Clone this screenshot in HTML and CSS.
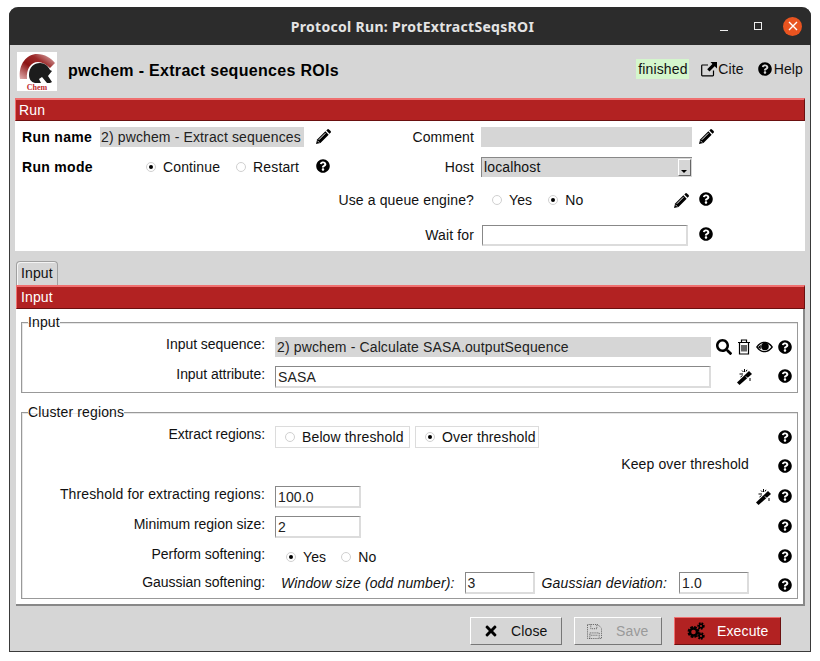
FILE: index.html
```html
<!DOCTYPE html>
<html>

<head>
  <meta charset="utf-8">
  <meta name="viewport" content="width=device-width">
  <title>Protocol Run: ProtExtractSeqsROI</title>
  <link rel="stylesheet" href="styles.css">
</head>

<body>
  <svg class="defs" width="0" height="0">
    <symbol id="help" viewBox="0 0 512 512">
      <path d="M504 256c0 136.997-111.043 248-248 248S8 392.997 8 256C8 119.083 119.043 8 256 8s248 111.083 248 248zM262.655 90c-54.497 0-89.255 22.957-116.549 63.758-3.536 5.286-2.353 12.415 2.715 16.258l34.699 26.31c5.205 3.947 12.621 3.008 16.665-2.122 17.864-22.658 30.113-35.797 57.303-35.797 20.429 0 45.698 13.148 45.698 32.958 0 14.976-12.363 22.667-32.534 33.976C247.128 238.528 216 254.941 216 296v4c0 6.627 5.373 12 12 12h56c6.627 0 12-5.373 12-12v-1.333c0-28.462 83.186-29.647 83.186-106.667 0-58.002-60.165-102-116.531-102zM256 338c-25.365 0-46 20.635-46 46 0 25.364 20.635 46 46 46s46-20.636 46-46c0-25.365-20.635-46-46-46z"/>
    </symbol>
    <symbol id="pencil" viewBox="0 0 16 16">
      <path d="M0 16L1.200 11.300 10 2.500 13.500 6 4.700 14.800z"/>
      <path d="M11 1.500L12.300.3Q13 -.2 13.800.4L15.600 2.200Q16.200 3 15.700 3.700L14.500 5z"/>
      <path d="M3 11.500L10 4.500" stroke="#fff" stroke-width="1" fill="none"/>
      <path d="M1.500 12.500L3.500 14.500" stroke="#fff" stroke-width=".8" fill="none"/>
    </symbol>
    <symbol id="search" viewBox="0 0 512 512">
      <path d="M505 442.7L405.3 343c-4.5-4.5-10.6-7-17-7H372c27.6-35.3 44-79.7 44-128C416 93.1 322.9 0 208 0S0 93.1 0 208s93.1 208 208 208c48.3 0 92.7-16.4 128-44v16.3c0 6.4 2.5 12.5 7 17l99.7 99.7c9.4 9.4 24.6 9.4 33.9 0l28.3-28.3c9.4-9.4 9.4-24.6.1-34zM208 336c-70.7 0-128-57.2-128-128 0-70.7 57.2-128 128-128 70.7 0 128 57.2 128 128 0 70.7-57.2 128-128 128z"/>
    </symbol>
    <symbol id="trash" viewBox="0 0 14 16">
      <path d="M1 3.500h12M4.500 3.500V1h5v2.500M2.500 3.500v11.500h9V3.500M5 6v6.500M7 6v6.500M9 6v6.500" fill="none" stroke="#000" stroke-width="1.200"/>
    </symbol>
    <symbol id="eye" viewBox="0 0 18 12">
      <path d="M0 6C3 1.500 6 .5 9 .5s6 1 9 5.500C15 10.500 12 11.500 9 11.500S3 10.500 0 6zM1.800 6C4 9 6.500 10.300 9 10.300S14 9 16.200 6C14 3 11.500 1.700 9 1.700S4 3 1.800 6z"/>
      <circle cx="9.500" cy="5.500" r="4"/>
      <path d="M2 6.200L5 3.500 5 8.500z"/>
    </symbol>
    <symbol id="wand" viewBox="0 0 16 16">
      <path d="M0 13.500L12 2 15 5 2.500 16z"/>
      <path d="M7.500 3V0M10 .8L9 2.500M5 1.500L6.500 3M2.500 5H6M3.500 8L5.500 6.500M13 9V12" stroke="#000" stroke-width="1" fill="none"/>
      <path d="M9 7.500L11 9.500" stroke="#fff" stroke-width="1" fill="none"/>
    </symbol>
    <symbol id="times" viewBox="0 0 352 512">
      <path d="M242.72 256l100.07-100.07c12.28-12.28 12.28-32.19 0-44.48l-22.24-22.24c-12.28-12.28-32.19-12.28-44.48 0L176 189.28 75.93 89.21c-12.28-12.28-32.19-12.28-44.48 0L9.21 111.45c-12.28 12.28-12.28 32.19 0 44.48L109.28 256 9.21 356.07c-12.28 12.28-12.28 32.19 0 44.48l22.24 22.24c12.28 12.28 32.2 12.28 44.48 0L176 322.72l100.07 100.07c12.28 12.28 32.2 12.28 44.48 0l22.24-22.24c12.28-12.28 12.28-32.19 0-44.48L242.72 256z"/>
    </symbol>
    <symbol id="save" viewBox="0 0 16 16">
      <path d="M.5 .5H11.500L15.500 4.500V15.500H.5zM4 .5V5H10.500V.5M3 15.500V9.500H13V15.500M4 12H12" fill="none" stroke="#555" stroke-width="1" stroke-dasharray="1 1"/>
    </symbol>
    <symbol id="cogs" viewBox="0 0 18 18">
      <circle cx="6.500" cy="10" r="4.700" fill="none" stroke="#000" stroke-width="2.600" stroke-dasharray="2.500 1.200"/>
      <circle cx="6.500" cy="10" r="3.500" fill="none" stroke="#000" stroke-width="2.400"/>
      <circle cx="14" cy="4" r="2.500" fill="none" stroke="#000" stroke-width="2.400" stroke-dasharray="1.500 .9"/>
      <circle cx="14" cy="4" r="1.800" fill="none" stroke="#000" stroke-width="1.500"/>
      <circle cx="14" cy="14" r="2.500" fill="none" stroke="#000" stroke-width="2.400" stroke-dasharray="1.500 .9"/>
      <circle cx="14" cy="14" r="1.800" fill="none" stroke="#000" stroke-width="1.500"/>
    </symbol>
    <symbol id="cite" viewBox="0 0 16 15">
      <path d="M12.500 9V13.600Q12.500 14.300 11.800 14.300H1.400Q.7 14.300 .7 13.600V4.200Q.7 3.500 1.400 3.500H7" fill="none" stroke="#000" stroke-width="1.200"/>
      <path d="M9.500 0.500H16V7L13.700 4.800 8.500 10 6.200 7.700 11.400 2.600z"/>
    </symbol>
  </svg>

  <div class="window">
    <div class="titlebar">
      <span></span>
      <span class="wintitle">Protocol Run: ProtExtractSeqsROI</span>
      <div class="winctl">
        <span class="winmin"></span>
        <span class="winmax"></span>
        <span class="winclose">
          <svg width="10" height="10" viewBox="0 0 10 10"><path d="M1 1L9 9M9 1L1 9" stroke="#fff" stroke-width="1.400"/></svg>
        </span>
      </div>
    </div>

    <div class="header">
      <svg class="logo" viewBox="0 0 40 39">
        <defs>
          <linearGradient id="arc" x1="0" y1="1" x2="1" y2="0">
            <stop offset="0" stop-color="#e2b0b0"/>
            <stop offset="0.4" stop-color="#8c1414"/>
            <stop offset="0.65" stop-color="#9c2a2a"/>
            <stop offset="1" stop-color="#e4c4c4"/>
          </linearGradient>
        </defs>
        <path d="M3 27C1 12 10 2 20 2 28 2 34 6 38 11L33 16C29 12 25 10 21 10 14 10 9 17 10 27z" fill="url(#arc)"/>
        <path d="M12 23C12 15 17 11 23 11 28 11 31 14 33 18L35 19 31 24 35 30 33 31H30L25 25 22 27 24 31H18C14 30 12 27 12 23z" fill="#1c1c1c"/>
        <text class="logotext" x="20" y="38" text-anchor="middle">Chem</text>
      </svg>
      <span class="protname">pwchem - Extract sequences ROIs</span>
      <span class="status">finished</span>
      <a class="toplink cite"><svg class="ic16"><use href="#cite"/></svg>Cite</a>
      <a class="toplink"><svg class="ic14"><use href="#help"/></svg>Help</a>
    </div>

    <div class="redbar">Run</div>
    <div class="runform">
      <b class="runlabel">Run name</b>
      <div class="readonly runname">2) pwchem - Extract sequences</div>
      <svg class="ic15 iconpad"><use href="#pencil"/></svg>
      <span class="rlabel">Comment</span>
      <div class="readonly"></div>
      <svg class="ic15 iconright"><use href="#pencil"/></svg>

      <b class="runlabel">Run mode</b>
      <div class="radios modes">
        <span class="radio on"></span><span class="optname wide">Continue</span>
        <span class="radio"></span><span class="optname">Restart</span>
      </div>
      <svg class="ic14 iconpad"><use href="#help"/></svg>
      <span class="rlabel">Host</span>
      <div class="select">localhost<span class="selectbtn"></span></div>
      <span></span>

      <span class="spanleft"></span>
      <span class="rlabel queue">Use a queue engine?</span>
      <div class="queueopts">
        <div class="radios">
          <span class="radio"></span><span class="optname yesgap">Yes</span>
          <span class="radio on"></span><span class="optname">No</span>
        </div>
        <svg class="ic15"><use href="#pencil"/></svg>
      </div>
      <svg class="ic14 iconright"><use href="#help"/></svg>

      <span class="spanleft"></span>
      <span class="rlabel">Wait for</span>
      <div class="entry waitfor"></div>
      <svg class="ic14 iconright"><use href="#help"/></svg>
    </div>

    <div class="tabs"><span class="tab">Input</span></div>
    <div class="redbar inputbar">Input</div>
    <div class="inputpanel">
      <fieldset class="group first">
        <legend>Input</legend>
        <div class="rows">
          <span class="label uplabel">Input sequence:</span>
          <div class="inrow">
            <div class="readonly seqfield">2) pwchem - Calculate SASA.outputSequence</div>
            <svg class="ic16"><use href="#search"/></svg>
            <svg class="trashic"><use href="#trash"/></svg>
            <svg class="eyeic"><use href="#eye"/></svg>
          </div>
          <svg class="ic14 helpic"><use href="#help"/></svg>

          <span class="label">Input attribute:</span>
          <div class="inrow">
            <div class="entry attrfield">SASA</div>
            <svg class="ic16 wandic"><use href="#wand"/></svg>
          </div>
          <svg class="ic14 helpic"><use href="#help"/></svg>
        </div>
      </fieldset>

      <fieldset class="group second">
        <legend>Cluster regions</legend>
        <div class="rows">
          <span class="label">Extract regions:</span>
          <div class="inrow">
            <div class="radiobox below"><span class="radio"></span><span class="optname">Below threshold</span></div>
            <div class="radiobox over"><span class="radio on"></span><span class="optname">Over threshold</span></div>
          </div>
          <svg class="ic14 helpic lowhelp"><use href="#help"/></svg>

          <span></span>
          <div class="keep">Keep over threshold</div>
          <svg class="ic14 helpic"><use href="#help"/></svg>

          <span class="label longlabel">Threshold for extracting regions:</span>
          <div class="inrow spread">
            <div class="entry small">100.0</div>
            <svg class="ic16"><use href="#wand"/></svg>
          </div>
          <svg class="ic14 helpic"><use href="#help"/></svg>

          <span class="label">Minimum region size:</span>
          <div class="inrow"><div class="entry small">2</div></div>
          <svg class="ic14 helpic"><use href="#help"/></svg>

          <span class="label">Perform softening:</span>
          <div class="radios soft">
            <span class="radio on"></span><span class="optname softyes">Yes</span>
            <span class="radio"></span><span class="optname">No</span>
          </div>
          <svg class="ic14 helpic"><use href="#help"/></svg>

          <span class="label">Gaussian softening:</span>
          <div class="inrow gauss">
            <i class="windowlabel">Window size (odd number):</i>
            <div class="entry tiny">3</div>
            <i class="devlabel">Gaussian deviation:</i>
            <div class="entry tiny">1.0</div>
          </div>
          <svg class="ic14 helpic lowhelp"><use href="#help"/></svg>
        </div>
      </fieldset>
    </div>

    <div class="footer">
      <button class="btn close"><svg class="ic16"><use href="#times"/></svg>Close</button>
      <button class="btn save" disabled><svg class="ic15"><use href="#save"/></svg>Save</button>
      <button class="btn exec"><svg class="cogsic"><use href="#cogs"/></svg>Execute</button>
    </div>
  </div>
</body>

</html>
```

FILE: styles.css
```css
body {
  margin: 0;
  background-color: #fff;
  font-family: "Liberation Sans", Arial, sans-serif;
  font-size: 14px;
  color: #111;
  letter-spacing: 0.13px;
}

.defs {
  position: absolute;
}

svg {
  display: block;
  flex: none;
}

.ic14 { width: 14px; height: 14px; }
.ic15 { width: 15px; height: 15px; }
.ic16 { width: 16px; height: 16px; }

.window {
  box-sizing: border-box;
  width: 802px;
  height: 645px;
  margin: 7px 0 0 9px;
  background-color: #d6d6d6;
  border: 1px solid #3a3a3a;
  border-top: none;
  border-radius: 9px 9px 0 0;
}

.titlebar {
  display: grid;
  grid-template-columns: 1fr auto 1fr;
  align-items: center;
  height: 38px;
  margin: 0 -1px;
  background-color: #2c2c2c;
  border-radius: 9px 9px 0 0;
}

.wintitle {
  padding-left: 5px;
  font-family: "Noto Sans", sans-serif;
  font-size: 14px;
  font-weight: 700;
  letter-spacing: 0.3px;
  color: #e4e4e4;
}

.winctl {
  display: flex;
  align-items: center;
  justify-content: flex-end;
  padding-right: 9px;
}

.winmin {
  width: 8px;
  height: 1px;
  margin: 9px 26px 0 0;
  background-color: #eee;
}

.winmax {
  box-sizing: border-box;
  width: 8px;
  height: 8px;
  margin: -1px 21px 0 0;
  border: 1px solid #eee;
}

.winclose {
  display: flex;
  align-items: center;
  justify-content: center;
  width: 19px;
  height: 19px;
  border-radius: 50%;
  background-color: #e95420;
}

.header {
  display: flex;
  align-items: center;
  height: 53px;
  padding: 0 7px;
}

.logo {
  width: 40px;
  height: 39px;
  margin-top: -1px;
  background-color: #fff;
}

.logotext {
  font-family: "Liberation Serif", serif;
  font-size: 8px;
  font-weight: 700;
  fill: #c02a2a;
  letter-spacing: 0;
}

.protname {
  flex: 1;
  margin: -2px 0 0 11px;
  font-size: 16px;
  font-weight: 700;
  letter-spacing: 0.31px;
  color: #000;
}

.status {
  box-sizing: border-box;
  width: 53px;
  height: 20px;
  margin-top: -5px;
  padding-left: 2px;
  line-height: 20px;
  background-color: #d4f6cc;
}

.toplink {
  display: flex;
  align-items: center;
  gap: 2px;
  margin-top: -5px;
}

.cite {
  margin: -5px 14px 0 12px;
  gap: 1px;
}

.redbar {
  box-sizing: border-box;
  height: 23px;
  margin: 0 5px;
  padding-left: 3px;
  line-height: 21px;
  color: #fff;
  background-color: #b22222;
  border: 1px solid #6b1010;
  border-top: 2px solid #ef7070;
  border-left: 1px solid #ef7070;
}

.runform {
  display: grid;
  grid-template-columns: 85px 204px 30px 147px 211px 113px;
  grid-template-rows: 30px 33px 35px 20px;
  align-items: start;
  height: 124px;
  margin: 0 5px;
  padding: 6px 0 0;
  background-color: #fff;
}

.runlabel {
  padding-left: 7px;
  line-height: 20px;
  letter-spacing: 0.3px;
  color: #000;
}

.rlabel {
  padding-right: 7px;
  line-height: 20px;
  text-align: right;
}

.queue {
  white-space: nowrap;
}

.spanleft {
  grid-column: span 3;
}

.readonly {
  height: 20px;
  padding-left: 2px;
  line-height: 20px;
  background-color: #d6d6d6;
  color: #222;
}

.runname {
  padding-left: 1px;
}

.iconpad {
  margin: 2px 0 0 12px;
}

.iconright {
  margin: 2px 0 0 7px;
}

.radios {
  display: flex;
  align-items: center;
  height: 20px;
}

.modes {
  padding-left: 46px;
}

.radio {
  box-sizing: border-box;
  display: flex;
  align-items: center;
  justify-content: center;
  flex: none;
  width: 10px;
  height: 10px;
  margin-right: 7px;
  background-color: #fff;
  border: 1px solid #d0d0d0;
  border-radius: 50%;
}

.radio.on::after {
  content: "";
  width: 4px;
  height: 4px;
  background-color: #000;
  border-radius: 50%;
}

.wide {
  margin-right: 16px;
}

.yesgap {
  margin-right: 16px;
}

.select {
  box-sizing: border-box;
  display: flex;
  align-items: center;
  justify-content: space-between;
  height: 20px;
  padding: 0 0 1px 2px;
  background-color: #d6d6d6;
  border-top: 1px solid #888;
  border-left: 1px solid #888;
}

.selectbtn {
  position: relative;
  box-sizing: border-box;
  width: 13px;
  height: 17px;
  margin-right: 1px;
  background-color: #d6d6d6;
  border: 1px solid;
  border-color: #fff #666 #666 #fff;
}

.selectbtn::after {
  content: "";
  position: absolute;
  left: 2px;
  bottom: 2px;
  border: 3px solid transparent;
  border-top: 3px solid #000;
  border-bottom: none;
}

.queueopts {
  display: flex;
  align-items: center;
  justify-content: space-between;
  height: 20px;
  padding: 0 3px 0 11px;
}

.entry {
  box-sizing: border-box;
  height: 22px;
  padding-left: 2px;
  line-height: 20px;
  color: #222;
  background-color: #fff;
  border: 2px solid #dcdcdc;
  border-top: 1px solid #888;
  border-left: 1px solid #888;
}

.waitfor {
  width: 206px;
  height: 21px;
  margin-left: 1px;
}

.tabs {
  display: flex;
  height: 24px;
  margin: 10px 0 0 6px;
}

.tab {
  box-sizing: border-box;
  width: 42px;
  padding-left: 4px;
  line-height: 23px;
  background-color: #d6d6d6;
  border: 1px solid #a0a0a0;
  border-bottom: none;
  border-radius: 4px 4px 0 0;
  box-shadow: inset 1px 1px #f4f4f4;
}

.inputbar {
  height: 24px;
  margin-left: 6px;
  padding-left: 4px;
  line-height: 20px;
}

.inputpanel {
  box-sizing: border-box;
  height: 297px;
  margin: 0 5px 0 6px;
  padding: 5px 6px 0 5px;
  background-color: #fff;
  border-right: 2px solid #888;
  border-bottom: 2px solid #888;
}

.group {
  box-sizing: border-box;
  width: 777px;
  margin: 0;
  padding: 0 5px 0 0;
  min-width: 0;
  border: 1px solid #999;
  box-shadow: inset 1px 1px #e6e6e6;
}

.group legend {
  margin-left: 6px;
  padding: 0;
  line-height: 16px;
}

.first {
  height: 79px;
}

.second {
  height: 195px;
  margin-top: 11px;
}

.rows {
  display: grid;
  grid-template-columns: 253px 1fr 14px;
  align-items: start;
}

.first .rows {
  grid-template-rows: 29px 22px;
  padding-top: 7px;
}

.second .rows {
  grid-template-rows: 30px 30px 30px 30px 28px 22px;
  padding-top: 6px;
}

.label {
  padding-right: 10px;
  line-height: 16px;
  text-align: right;
  letter-spacing: -0.05px;
}

.longlabel {
  letter-spacing: 0.13px;
}

.uplabel {
  line-height: 14px;
}

.inrow {
  display: flex;
  align-items: center;
  gap: 5px;
}

.helpic {
  margin-top: 3px;
}

.lowhelp {
  margin-top: 4px;
}

.seqfield {
  width: 434px;
}

.attrfield {
  width: 436px;
}

.trashic {
  width: 14px;
  height: 16px;
}

.eyeic {
  width: 17px;
  height: 12px;
}

.wandic {
  margin-left: 21px;
}

.radiobox {
  box-sizing: border-box;
  display: flex;
  align-items: center;
  height: 22px;
  padding-left: 9px;
  border: 1px solid #dcdcdc;
}

.below {
  width: 135px;
}

.over {
  width: 124px;
}

.keep {
  padding-right: 29px;
  line-height: 16px;
  text-align: right;
}

.spread {
  justify-content: space-between;
  padding-right: 6px;
}

.small {
  width: 86px;
}

.soft {
  height: 22px;
  padding-left: 11px;
}

.softyes {
  margin-right: 15px;
}

.gauss {
  gap: 0;
  margin-top: -2px;
  font-style: italic;
}

.windowlabel {
  margin: 0 10px 0 6px;
}

.devlabel {
  margin: 0 12px 0 7px;
}

.tiny {
  width: 70px;
  font-style: normal;
}

.footer {
  display: flex;
  justify-content: flex-end;
  gap: 12px;
  padding: 11px 29px 0 0;
}

.btn {
  box-sizing: border-box;
  display: flex;
  align-items: center;
  height: 28px;
  padding: 0 0 0 12px;
  font: inherit;
  letter-spacing: inherit;
  color: #111;
  background-color: #d6d6d6;
  border: 1px solid;
  border-color: #fff #777 #777 #fff;
}

.btn svg {
  margin-right: 12px;
}

.save {
  width: 88px;
  color: #9a9a9a;
}

.save svg {
  margin-right: 14px;
}

.close {
  width: 92px;
}

.exec {
  width: 107px;
  color: #fff;
  background-color: #b22222;
  border-color: #ef7070 #6b1010 #6b1010 #ef7070;
}

.cogsic {
  width: 18px;
  height: 18px;
}
```
